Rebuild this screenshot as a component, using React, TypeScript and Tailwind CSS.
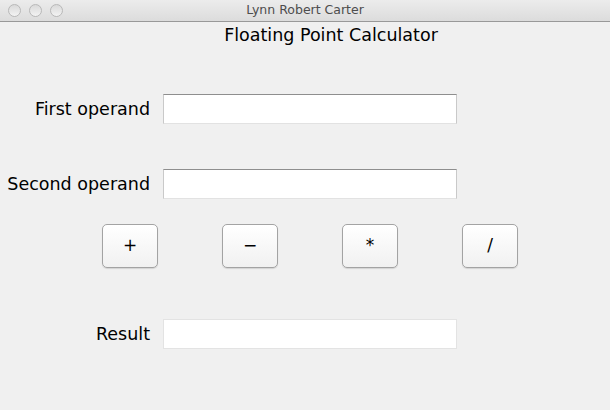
import React from 'react';

const font = { fontFamily: '"DejaVu Sans", "Lucida Grande", sans-serif' };

const Field = ({ label, result }: { label: string; result?: boolean }) => (
  <div className="flex items-center h-[30px]">
    <div className="w-[150px] text-right text-[17.5px] text-black whitespace-nowrap">{label}</div>
    <div
      className={
        result
          ? 'ml-[13px] w-[294px] h-[30px] bg-white border border-[#e3e3e3]'
          : 'ml-[13px] w-[294px] h-[30px] bg-white border border-[#c9c9c9] border-t-[#8e8e8e] border-b-[#e2e2e2]'
      }
    />
  </div>
);

const OpButton = ({ label }: { label: string }) => (
  <button className="w-[56px] h-[44px] rounded-[5px] border border-[#a3a3a3] bg-gradient-to-b from-white to-[#f1f1f1] shadow-[0_1px_1px_rgba(0,0,0,0.12)] text-[17px] text-black flex items-center justify-center">
    {label}
  </button>
);

export default function App() {
  return (
    <div className="w-[610px] h-[410px] bg-[#f0f0f0] flex flex-col overflow-hidden" style={font}>
      {/* Title bar */}
      <div className="h-[22px] flex-shrink-0 relative flex items-center justify-center bg-gradient-to-b from-[#ececec] to-[#dcdcdc] border-b border-[#999]">
        <div className="absolute left-[8px] top-[4px] flex gap-[8px]">
          {[0, 1, 2].map((i) => (
            <div
              key={i}
              className="w-[13px] h-[13px] rounded-full border border-[#b8b8b8] bg-gradient-to-b from-[#d9d9d9] to-[#f3f3f3]"
            />
          ))}
        </div>
        <span className="text-[12.5px] text-[#4d4d4d]">Lynn Robert Carter</span>
      </div>

      {/* Heading */}
      <div className="pl-[52px] text-center text-[17.5px] text-black mt-[1px] leading-[24px]">
        Floating Point Calculator
      </div>

      <div className="mt-[47px]">
        <Field label="First operand" />
      </div>
      <div className="mt-[45px]">
        <Field label="Second operand" />
      </div>

      <div className="mt-[25px] pl-[102px] flex gap-[64px]">
        <OpButton label="+" />
        <OpButton label="−" />
        <OpButton label="*" />
        <OpButton label="/" />
      </div>

      <div className="mt-[51px]">
        <Field label="Result" result />
      </div>
    </div>
  );
}
